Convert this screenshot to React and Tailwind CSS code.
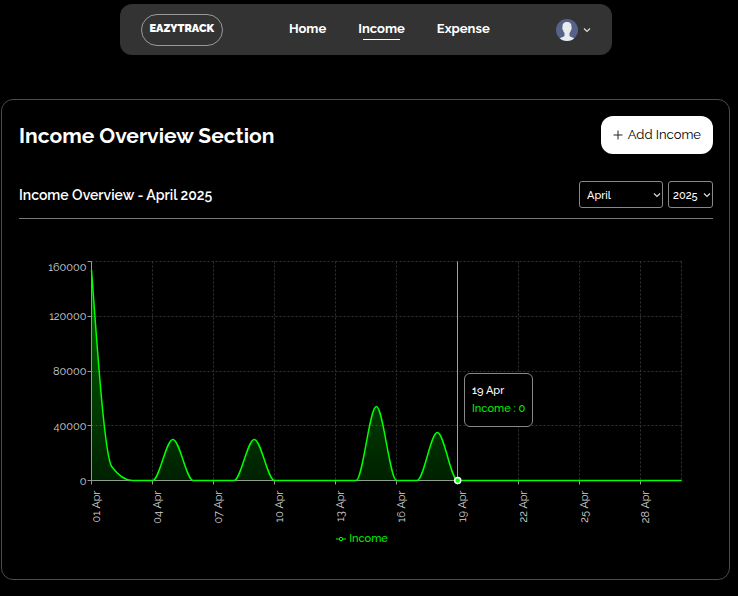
import React, { useLayoutEffect, useRef, useState } from "react";

const DAYS = 30;
const AMOUNTS = { 1: 154000, 2: 10000, 5: 30000, 9: 30000, 15: 54000, 18: 35000 };
const DATA = Array.from({ length: DAYS }, (_, i) => AMOUNTS[i + 1] || 0);
const Y_TICKS = [0, 40000, 80000, 120000, 160000];
const X_TICKS = [1, 4, 7, 10, 13, 16, 19, 22, 25, 28];
const ACTIVE_DAY = 19;
const MONTHS = ["January", "February", "March", "April", "May", "June", "July", "August", "September", "October", "November", "December"];

const PLOT = { left: 72, right: 32, top: 32, height: 219 };

const pad = (n) => String(n).padStart(2, "0");

// Monotone cubic interpolation through the given points.
function monotonePath(pts) {
  const n = pts.length;
  const slope = (i) => (pts[i + 1][1] - pts[i][1]) / (pts[i + 1][0] - pts[i][0]);
  const m = pts.map((_, i) => {
    if (i === 0 || i === n - 1) return 0;
    const a = slope(i - 1);
    const b = slope(i);
    if (a * b <= 0) return 0;
    return Math.sign(a) * Math.min(Math.abs(a), Math.abs(b), Math.abs(a + b) / 4) * 2;
  });
  m[0] = (3 * slope(0) - m[1]) / 2;
  m[n - 1] = (3 * slope(n - 2) - m[n - 2]) / 2;
  let d = `M${pts[0][0]},${pts[0][1]}`;
  for (let i = 1; i < n; i++) {
    const dx = (pts[i][0] - pts[i - 1][0]) / 3;
    d += `C${pts[i - 1][0] + dx},${pts[i - 1][1] + dx * m[i - 1]},${pts[i][0] - dx},${pts[i][1] - dx * m[i]},${pts[i][0]},${pts[i][1]}`;
  }
  return d;
}

function IncomeChart() {
  const box = useRef(null);
  const [width, setWidth] = useState(694);

  useLayoutEffect(() => {
    const measure = () => setWidth(box.current.clientWidth);
    measure();
    const observer = new ResizeObserver(measure);
    observer.observe(box.current);
    return () => observer.disconnect();
  }, []);

  const right = width - PLOT.right;
  const bottom = PLOT.top + PLOT.height;
  const x = (day) => PLOT.left + ((day - 1) * (right - PLOT.left)) / (DAYS - 1);
  const y = (value) => bottom - (value / 160000) * PLOT.height;
  const line = monotonePath(DATA.map((v, i) => [x(i + 1), y(v)]));
  const gridX = [...X_TICKS, DAYS];

  return (
    <div ref={box} className="relative mt-[10px] h-72">
      {/* Half-pixel origin keeps one-pixel strokes on whole pixels. */}
      <svg
        width={width}
        height="288"
        viewBox={`-0.5 -0.5 ${width} 288`}
        className="block overflow-visible"
        role="img"
        aria-label="Income per day"
      >
        <defs>
          <linearGradient id="incomeFill" x1="0" y1="0" x2="0" y2="1">
            <stop offset="5%" stopColor="#00ff00" stopOpacity="0.4" />
            <stop offset="100%" stopColor="#00ff00" stopOpacity="0.13" />
          </linearGradient>
        </defs>
        <g stroke="#333333" strokeDasharray="2 2">
          {Y_TICKS.map((v) => (
            <line key={v} x1={PLOT.left} x2={right} y1={Math.round(y(v))} y2={Math.round(y(v))} />
          ))}
          {gridX.map((d) => (
            <line key={d} x1={Math.round(x(d))} x2={Math.round(x(d))} y1={PLOT.top} y2={bottom} />
          ))}
        </g>
        <g stroke="#999999">
          <line x1={PLOT.left} x2={PLOT.left} y1={PLOT.top} y2={bottom} />
          <line x1={PLOT.left} x2={right} y1={bottom} y2={bottom} />
          {Y_TICKS.map((v) => (
            <line key={v} x1={PLOT.left - 4} x2={PLOT.left} y1={Math.round(y(v))} y2={Math.round(y(v))} />
          ))}
          {X_TICKS.map((d) => (
            <line key={d} x1={Math.round(x(d))} x2={Math.round(x(d))} y1={bottom} y2={bottom + 4} />
          ))}
        </g>
        <g fill="#d4d4d4" className="text-[11px]">
          {Y_TICKS.map((v) => (
            <text key={v} x={PLOT.left - 5} y={v === 160000 ? y(v) + 9 : y(v) + 4} textAnchor="end">
              {v}
            </text>
          ))}
          {X_TICKS.map((d) => (
            <text key={d} textAnchor="end" transform={`translate(${x(d) + 8} ${bottom + 10}) rotate(-90)`}>
              {pad(d)} Apr
            </text>
          ))}
        </g>
        <path d={`${line}L${right},${bottom}L${PLOT.left},${bottom}Z`} fill="url(#incomeFill)" />
        <path d={line} fill="none" stroke="#00ff00" strokeWidth="1.5" />
        <line x1={Math.round(x(ACTIVE_DAY))} x2={Math.round(x(ACTIVE_DAY))} y1={PLOT.top} y2={bottom} stroke="#a3a3a3" />
        <circle cx={x(ACTIVE_DAY)} cy={bottom} r="3" fill="#00ff00" stroke="#ffffff" strokeWidth="1.5" />
      </svg>
      <div
        className="absolute top-36 rounded-md border border-[#888888] bg-black px-[7px] py-2 text-[11px] leading-[18px] font-medium whitespace-nowrap text-white"
        style={{ left: Math.round(x(ACTIVE_DAY)) + 7 }}
      >
        <p>{ACTIVE_DAY} Apr</p>
        <p className="text-[#00f000]">Income : {DATA[ACTIVE_DAY - 1]}</p>
      </div>
    </div>
  );
}

function Chevron({ className }) {
  return (
    <svg viewBox="0 0 8 8" className={className} fill="none" stroke="#dddddd" strokeWidth="1.2" aria-hidden="true">
      <path d="M1 2.5 4 5.5 7 2.5" />
    </svg>
  );
}

function Picker({ label, className, selectClass, value, options }) {
  return (
    <div className={`relative ${className}`}>
      <select
        aria-label={label}
        defaultValue={value}
        className={`block w-full appearance-none rounded-[3px] border border-[#888888] bg-black pt-[6px] pb-[3px] text-[11px] leading-4 font-medium text-white ${selectClass}`}
      >
        {options.map((o) => (
          <option key={o}>{o}</option>
        ))}
      </select>
      <Chevron className="pointer-events-none absolute top-[10px] right-[2px] size-2" />
    </div>
  );
}

function Navbar() {
  return (
    <nav className="mx-auto mt-1 flex h-[51px] w-[492px] max-w-full items-center justify-between rounded-xl bg-[#333333] px-[21px]">
      <a href="#" className="flex h-8 items-center rounded-full border border-[#999999] px-2 text-[11px] font-black">
        EAZYTRACK
      </a>
      <div className="flex gap-8 pb-[2px] text-[13px] leading-4 font-bold">
        <a href="#home">Home</a>
        <a href="#income" className="relative">
          Income
          <span className="absolute -bottom-[3px] left-[10%] h-px w-4/5 bg-white" />
        </a>
        <a href="#expense">Expense</a>
      </div>
      <button type="button" aria-label="Account menu" className="flex items-center gap-[5px]">
        <svg viewBox="0 0 22 22" className="size-[22px]" aria-hidden="true">
          <clipPath id="avatarClip">
            <circle cx="11" cy="11" r="11" />
          </clipPath>
          <g clipPath="url(#avatarClip)">
            <rect width="22" height="22" fill="#566288" />
            <path
              fill="#e7eced"
              d="M11 3C8 3 6.300 4.500 6.500 8.200c-.5.3-.2 2.300.5 2.800.3 1.300.8 2.200 1.500 2.900v2.800C8 18 4.500 18.300 3 20v2h16v-2c-1.500-1.700-5-2-5.500-3.300v-2.800c.7-.7 1.200-1.600 1.500-2.900.7-.5 1-2.500.5-2.800C15.700 4.500 14 3 11 3Z"
            />
          </g>
        </svg>
        <Chevron className="size-2" />
      </button>
    </nav>
  );
}

export default function App() {
  return (
    <div className="flow-root min-h-screen bg-black pr-[7px] font-['Raleway','Lato',sans-serif] text-white oldstyle-nums">
      <Navbar />
      <main className="mx-px mt-11 mb-4 rounded-xl border border-[#4b4b4f] px-4 pt-4 pb-8 sm:pl-[17px]">
        <div className="flex items-center justify-between">
          <h1 className="pt-[2px] text-[21px] leading-7 font-bold">Income Overview Section</h1>
          <button type="button" className="flex h-[38px] items-center gap-[5px] rounded-xl bg-white px-3 text-[13px] text-black">
            <svg viewBox="0 0 10 10" className="size-[10px]" stroke="#222222" aria-hidden="true">
              <path d="M5 .5v9M.5 5h9" />
            </svg>
            Add Income
          </button>
        </div>
        <div className="mt-[27px] flex items-center justify-between border-b border-[#777777] pb-[10px]">
          <h2 className="text-[14px] leading-5 font-semibold">Income Overview - April 2025</h2>
          <div className="flex gap-[5px]">
            <Picker label="Month" className="w-[84px]" selectClass="pl-[7px] pr-3" value="April" options={MONTHS} />
            <Picker label="Year" className="w-[45px]" selectClass="pl-1" value="2025" options={["2023", "2024", "2025"]} />
          </div>
        </div>
        <IncomeChart />
        <div className="mt-[14px] flex items-center justify-center gap-[3px] pr-2 text-[11px] leading-4 font-medium text-[#00f000]">
          <svg viewBox="0 0 10 10" className="size-[10px]" fill="none" stroke="#00ff00" aria-hidden="true">
            <path d="M0 5h3.300M6.700 5H10" />
            <circle cx="5" cy="5" r="1.700" />
          </svg>
          Income
        </div>
      </main>
    </div>
  );
}
